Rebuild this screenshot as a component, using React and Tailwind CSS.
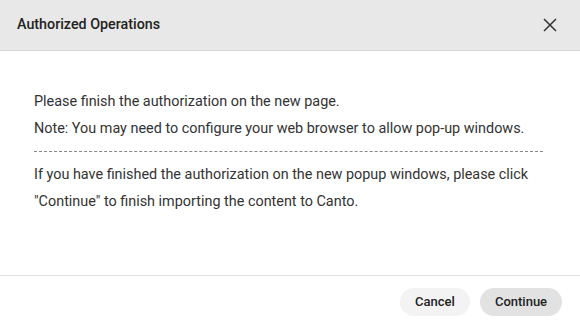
export default function App() {
  return (
    <div className="w-[580px] h-[328px] bg-white flex flex-col text-[#333]" style={{ fontFamily: 'Roboto, "Liberation Sans", sans-serif' }}>
      <div className="h-[51px] bg-[#e8e8e8] border-b border-[#d6d6d6] flex items-center justify-between pl-[17px] pr-[23px] shrink-0">
        <div className="text-[14.3px] font-medium text-[#222]">Authorized Operations</div>
        <svg width="14" height="14" viewBox="0 0 14 14" className="text-[#333]">
          <path d="M1 1L13 13M13 1L1 13" stroke="currentColor" strokeWidth="1.5" />
        </svg>
      </div>
      <div className="flex-1 px-[34px] pt-[37px] text-[14.4px] leading-[27px] text-[#333]">
        <p>Please finish the authorization on the new page.</p>
        <p>Note: You may need to configure your web browser to allow pop-up windows.</p>
        <div className="border-t border-dashed border-[#888] mt-[9px] mb-[9px] w-[509px]"></div>
        <p>If you have finished the authorization on the new popup windows, please click</p>
        <p>"Continue" to finish importing the content to Canto.</p>
      </div>
      <div className="h-[53px] border-t border-[#e0e0e0] flex items-center justify-end gap-[10px] pr-[18px] shrink-0">
        <button className="h-[28px] w-[70px] rounded-full bg-[#f3f3f3] text-[13px] font-medium text-[#222]">Cancel</button>
        <button className="h-[28px] w-[82px] rounded-full bg-[#e2e2e2] text-[13px] font-medium text-[#222]">Continue</button>
      </div>
    </div>
  );
}
